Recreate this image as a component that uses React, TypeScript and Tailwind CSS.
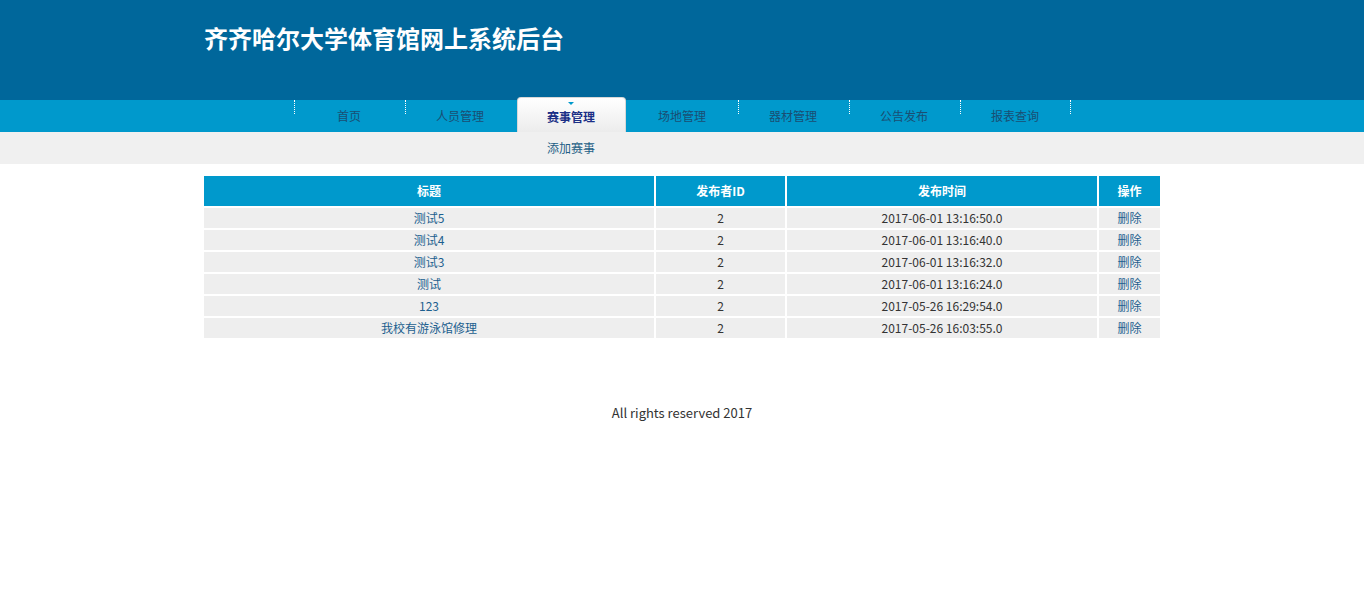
const NAV = ['首页', '人员管理', '赛事管理', '场地管理', '器材管理', '公告发布', '报表查询'];
const ACTIVE = 2;

const ROWS = [
  { title: '测试5', uid: '2', time: '2017-06-01 13:16:50.0' },
  { title: '测试4', uid: '2', time: '2017-06-01 13:16:40.0' },
  { title: '测试3', uid: '2', time: '2017-06-01 13:16:32.0' },
  { title: '测试', uid: '2', time: '2017-06-01 13:16:24.0' },
  { title: '123', uid: '2', time: '2017-05-26 16:29:54.0' },
  { title: '我校有游泳馆修理', uid: '2', time: '2017-05-26 16:03:55.0' },
];

const font = "font-['Microsoft_YaHei','Noto_Sans_CJK_SC',sans-serif]";

function Sep() {
  return <span className="absolute left-0 top-0 h-[14px] border-l border-dotted border-white" />;
}

export default function App() {
  return (
    <div className={`min-h-screen bg-white ${font}`}>
      <header className="h-[100px] bg-[#00679b]">
        <div className="mx-auto w-[960px] pl-[2px] pt-[22px]">
          <h1 className="text-[24px] leading-[32px] font-bold text-white">齐齐哈尔大学体育馆网上系统后台</h1>
        </div>
      </header>

      <nav className="h-[32px] bg-[#0099cc]">
        <ul className="mx-auto flex w-[777px]">
          {NAV.map((n, i) => (
            <li key={n} className="relative h-[32px] w-[111px]">
              {i !== ACTIVE && i !== ACTIVE + 1 && <Sep />}
              {i === ACTIVE ? (
                <div className="relative mx-[1px] -mt-[3px] flex h-[35px] items-center justify-center rounded-t-[4px] border border-b-0 border-[#d8d8d8] bg-gradient-to-b from-white to-[#ececec] pt-[3px] text-[12px] font-bold text-[#1b2f86]">
                  <span className="absolute left-1/2 top-[4px] -translate-x-1/2 border-x-[3px] border-t-[3px] border-x-transparent border-t-[#0099cc]" />
                  {n}
                </div>
              ) : (
                <div className="flex h-[32px] items-center justify-center text-[12px] text-[#1a4e73]">{n}</div>
              )}
              {i === NAV.length - 1 && (
                <span className="absolute right-0 top-0 h-[14px] border-l border-dotted border-white" />
              )}
            </li>
          ))}
        </ul>
      </nav>

      <div className="h-[32px] bg-[#f0f0f0]">
        <div className="mx-auto flex w-[777px]">
          <div className="w-[222px]" />
          <div className="flex h-[32px] w-[111px] items-center justify-center text-[12px] text-[#1f5f86]">添加赛事</div>
        </div>
      </div>

      <table className="mx-auto mt-[10px] w-[960px] border-separate border-spacing-[2px] text-[12px]">
        <thead>
          <tr className="h-[30px] bg-[#0099cc] font-bold text-white">
            <th className="w-[450px] font-bold">标题</th>
            <th className="w-[129px] font-bold">发布者ID</th>
            <th className="w-[310px] font-bold">发布时间</th>
            <th className="w-[61px] font-bold">操作</th>
          </tr>
        </thead>
        <tbody>
          {ROWS.map((r) => (
            <tr key={r.time} className="h-[20px] bg-[#eeeeee] text-center leading-[20px]">
              <td className="p-0 text-[#1c5f8f]">{r.title}</td>
              <td className="p-0 text-[#333333]">{r.uid}</td>
              <td className="p-0 text-[#333333]">{r.time}</td>
              <td className="p-0 text-[#1f5f8f]">删除</td>
            </tr>
          ))}
        </tbody>
      </table>

      <footer className="mt-[64px] text-center text-[13px] leading-[18px] text-[#333333]">All rights reserved 2017</footer>
    </div>
  );
}
